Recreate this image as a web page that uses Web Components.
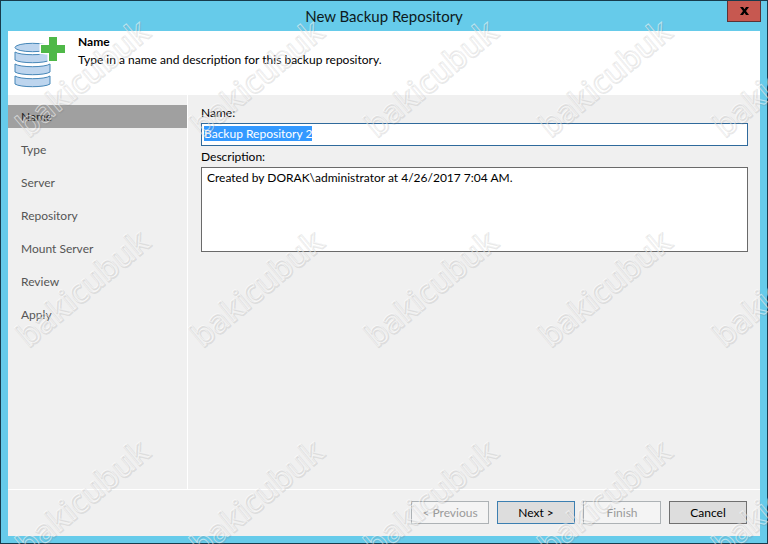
<!DOCTYPE html>
<html lang="en">
<head>
<meta charset="utf-8">
<title>New Backup Repository</title>
<style>
  body {
    margin: 0;
    min-height: 100vh;
    display: flex;
    font: 12px/16px Lato, "Open Sans", sans-serif;
    color: #000;
  }
</style>
</head>
<body>
<wizard-window heading="New Backup Repository">
  <wizard-header slot="header" heading="Name">Type in a name and description for this backup repository.</wizard-header>
  <wizard-steps slot="steps" steps="Name,Type,Server,Repository,Mount Server,Review,Apply" current="Name"></wizard-steps>
  <repository-form></repository-form>
  <wizard-button slot="footer" disabled>&lt; Previous</wizard-button>
  <wizard-button slot="footer" primary>Next &gt;</wizard-button>
  <wizard-button slot="footer" disabled>Finish</wizard-button>
  <wizard-button slot="footer">Cancel</wizard-button>
</wizard-window>
<water-mark text="bakicubuk"></water-mark>

<script>
class WizardWindow extends HTMLElement {
  connectedCallback() {
    this.attachShadow({ mode: 'open' });
    this.shadowRoot.innerHTML = `
      <style>
        :host {
          flex: 1;
          display: flex;
          flex-direction: column;
          box-sizing: border-box;
          border: 1px solid #173b4c;
          padding: 0 7px 7px;
          background-color: #66cbea;
        }

        .title-bar {
          display: grid;
          grid-template-columns: 1fr auto 1fr;
          align-items: start;
          height: 30px;
        }

        h1 {
          grid-column: 2;
          margin: 0;
          font-size: 15px;
          font-weight: 400;
          line-height: 30px;
          color: #0d1a20;
        }

        .close {
          justify-self: end;
          display: flex;
          align-items: center;
          justify-content: center;
          width: 34px;
          height: 21px;
          margin-right: -1px;
          padding: 0;
          border: 1px solid #5b3236;
          border-top: 0;
          background-color: #c75850;
        }

        .client {
          flex: 1;
          display: flex;
          flex-direction: column;
          background-color: #f0f0f0;
        }

        .body {
          flex: 1;
          display: grid;
          grid-template-columns: 180px 1fr;
        }

        aside {
          border-right: 1px solid #fff;
        }

        main {
          padding: 10px 12px 10px 13px;
        }

        footer {
          display: flex;
          justify-content: flex-end;
          gap: 8px;
          padding: 11px 13px 12px;
          border-top: 1px solid #fff;
        }
      </style>

      <div class="title-bar">
        <h1></h1>
        <button class="close" aria-label="Close">
          <svg width="9" height="8" viewBox="0 0 9 8"><path d="M0 0h3l1.500 2.300L6 0h3L6 4l3 4H6L4.500 5.700 3 8H0l3-4z" fill="#000"/></svg>
        </button>
      </div>
      <div class="client">
        <slot name="header"></slot>
        <div class="body">
          <aside><slot name="steps"></slot></aside>
          <main><slot></slot></main>
        </div>
        <footer><slot name="footer"></slot></footer>
      </div>
    `;
    this.shadowRoot.querySelector('h1').textContent = this.getAttribute('heading');
  }
}

class WizardHeader extends HTMLElement {
  connectedCallback() {
    this.attachShadow({ mode: 'open' });
    this.shadowRoot.innerHTML = `
      <style>
        :host {
          display: flex;
          gap: 12px;
          height: 64px;
          padding-left: 6px;
          box-sizing: border-box;
          background-color: #fff;
        }

        svg {
          flex: none;
          margin-top: 5px;
        }

        h2 {
          margin: 3px 0 2px;
          font-size: 12px;
          line-height: 16px;
          font-weight: 700;
        }

        p {
          margin: 0;
        }
      </style>

      <svg width="52" height="54" viewBox="0 0 52 54">
        <!-- database stack -->
        <g fill="#bdd5ee" stroke="#4687b8" stroke-width="1">
          <ellipse cx="18.500" cy="11.500" rx="17.500" ry="4.200"/>
          <path d="M1 16c5 3.600 30 3.600 35 0v8c-5 3.600-30 3.600-35 0z"/>
          <path d="M1 28c5 3.600 30 3.600 35 0v8c-5 3.600-30 3.600-35 0z"/>
          <path d="M1 40c5 3.600 30 3.600 35 0v8c-5 3.600-30 3.600-35 0z"/>
        </g>
        <!-- plus sign with a white halo -->
        <path d="M35 1h8v8h8v8h-8v8h-8v-8h-8V9h8z" fill="#4fb848" stroke="#fff" stroke-width="3" paint-order="stroke"/>
      </svg>
      <div>
        <h2></h2>
        <p><slot></slot></p>
      </div>
    `;
    this.shadowRoot.querySelector('h2').textContent = this.getAttribute('heading');
  }
}

class WizardSteps extends HTMLElement {
  connectedCallback() {
    const current = this.getAttribute('current');
    const items = this.getAttribute('steps').split(',').map(step =>
      `<li><a href="#"${step === current ? ' aria-current="step"' : ''}>${step}</a></li>`
    ).join('');

    this.attachShadow({ mode: 'open' });
    this.shadowRoot.innerHTML = `
      <style>
        :host {
          display: block;
          padding-top: 10px;
        }

        ul {
          display: flex;
          flex-direction: column;
          gap: 10px;
          margin: 0;
          padding: 0;
          list-style: none;
        }

        a {
          display: block;
          padding-left: 13px;
          line-height: 23px;
          color: #555;
          text-decoration: none;
        }

        a[aria-current] {
          background-color: #a0a0a0;
          color: #222;
        }
      </style>
      <nav><ul>${items}</ul></nav>
    `;
  }
}

class RepositoryForm extends HTMLElement {
  connectedCallback() {
    this.attachShadow({ mode: 'open' });
    this.shadowRoot.innerHTML = `
      <style>
        :host {
          display: block;
        }

        form {
          display: flex;
          flex-direction: column;
        }

        label {
          line-height: 16px;
          margin-bottom: 2px;
        }

        input,
        textarea {
          box-sizing: border-box;
          width: 100%;
          margin: 0;
          font: inherit;
          color: inherit;
          background-color: #fff;
          border-radius: 0;
          outline: none;
        }

        input {
          height: 23px;
          margin-bottom: 3px;
          padding: 0 2px 2px;
          border: 1px solid #2f6a9c;
        }

        input::selection {
          background-color: #3399ff;
          color: #fff;
        }

        textarea {
          height: 85px;
          padding: 2px 5px;
          border: 1px solid #6a6a6a;
          resize: none;
        }
      </style>

      <form>
        <label for="name">Name:</label>
        <input id="name" type="text" value="Backup Repository 2" spellcheck="false">
        <label for="description">Description:</label>
        <textarea id="description" spellcheck="false">Created by DORAK\\administrator at 4/26/2017 7:04 AM.</textarea>
      </form>
    `;

    // the name is preselected so that typing replaces it
    const name = this.shadowRoot.getElementById('name');
    name.focus();
    name.select();
  }
}

class WizardButton extends HTMLElement {
  connectedCallback() {
    this.attachShadow({ mode: 'open' });
    this.shadowRoot.innerHTML = `
      <style>
        :host {
          display: block;
        }

        button {
          width: 78px;
          height: 23px;
          padding: 0;
          font: inherit;
          color: #000;
          background-color: #dddddd;
          border: 1px solid #707070;
          border-radius: 0;
        }

        :host([primary]) button {
          border-color: #3c7fb1;
        }

        button:disabled {
          color: #9a9a9a;
          background-color: #f4f4f4;
          border-color: #adb2b5;
        }
      </style>
      <button type="button"${this.hasAttribute('disabled') ? ' disabled' : ''}><slot></slot></button>
    `;
  }
}

class WaterMark extends HTMLElement {
  connectedCallback() {
    const text = this.getAttribute('text');
    let marks = '';
    for (let row = 0; row < 3; row++) {
      for (let col = 0; col < 5; col++) {
        marks += `<text transform="translate(${28 + col * 174} ${138 + row * 210}) rotate(-40)">${text}</text>`;
      }
    }

    this.attachShadow({ mode: 'open' });
    this.shadowRoot.innerHTML = `
      <style>
        :host {
          position: absolute;
          inset: 0;
          overflow: hidden;
          pointer-events: none;
        }

        svg {
          display: block;
          width: 100%;
          height: 100%;
        }

        text {
          font: 600 32px "Open Sans", sans-serif;
          fill: none;
          stroke-linejoin: round;
        }

        .shade {
          stroke: #777;
          stroke-opacity: 0.16;
          stroke-width: 2;
        }

        .light {
          stroke: #fff;
          stroke-opacity: 0.55;
          stroke-width: 1;
        }
      </style>
      <svg aria-hidden="true">
        <g class="shade" transform="translate(1 1)">${marks}</g>
        <g class="light">${marks}</g>
      </svg>
    `;
  }
}

customElements.define('wizard-window', WizardWindow);
customElements.define('wizard-header', WizardHeader);
customElements.define('wizard-steps', WizardSteps);
customElements.define('repository-form', RepositoryForm);
customElements.define('wizard-button', WizardButton);
customElements.define('water-mark', WaterMark);
</script>
</body>
</html>
